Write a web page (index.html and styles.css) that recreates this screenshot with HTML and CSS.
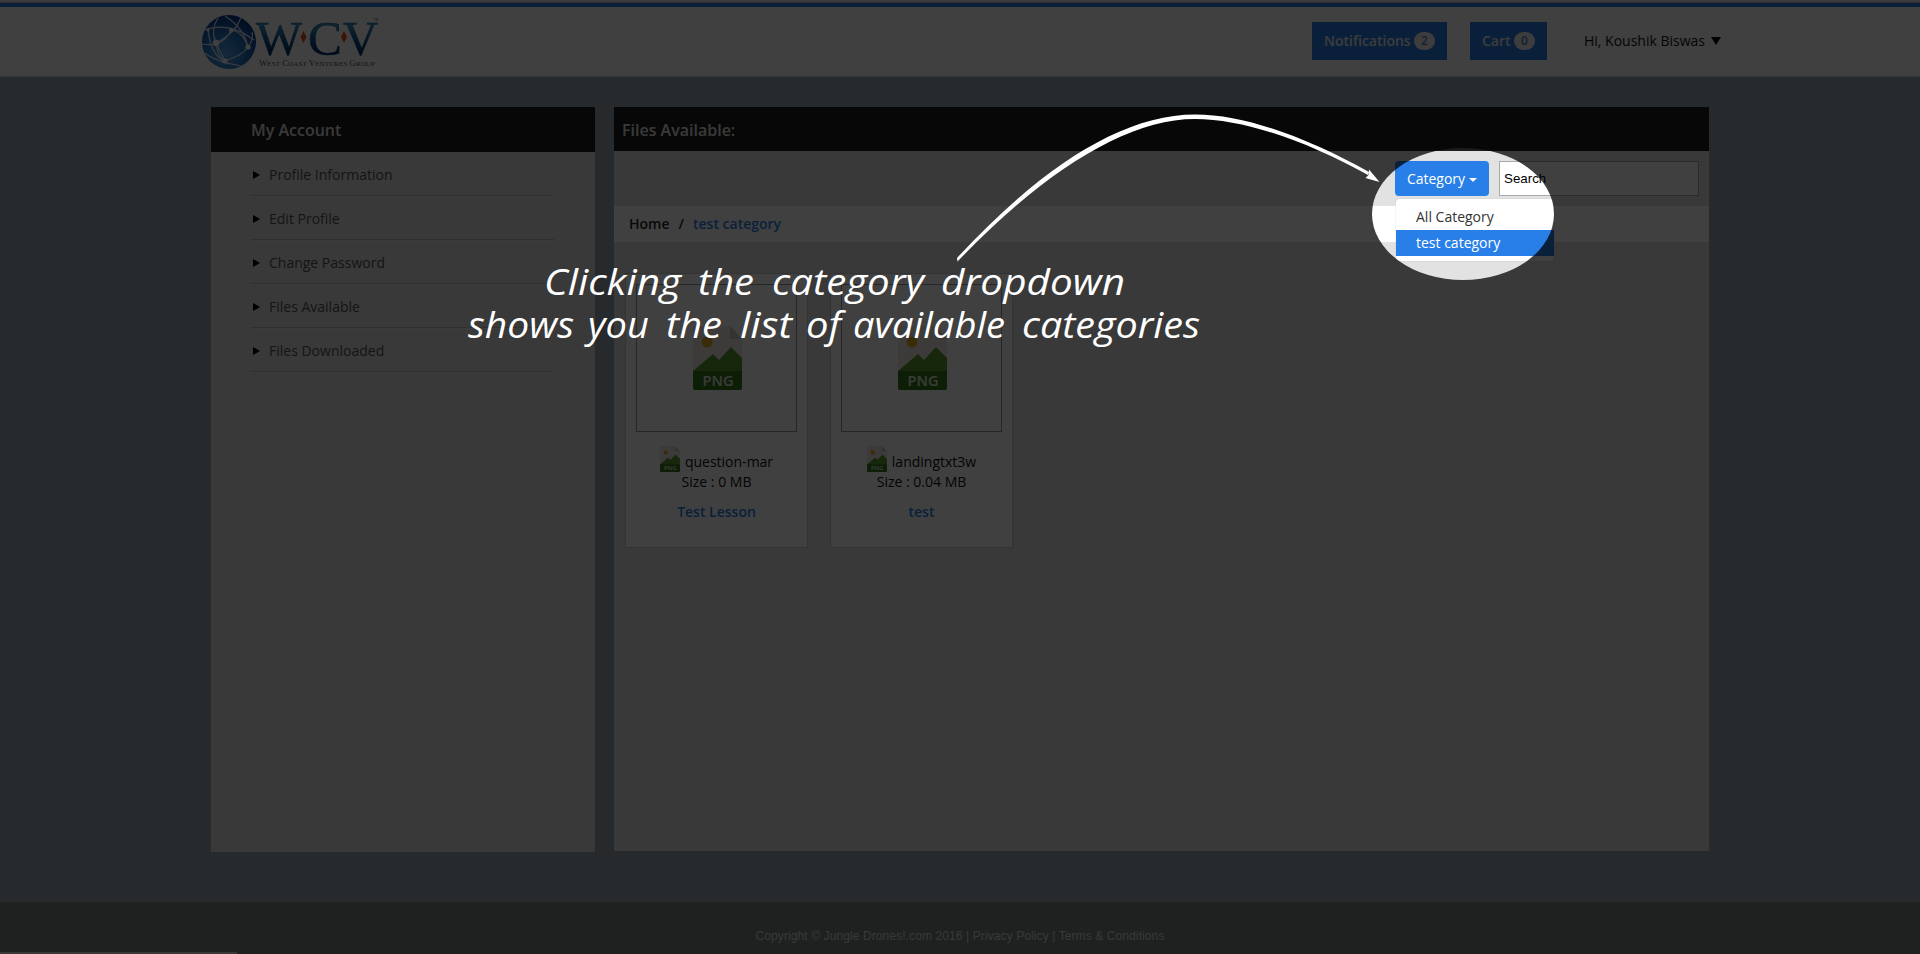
FILE: index.html
```html
<!DOCTYPE html>
<html lang="en">
<head>
<meta charset="utf-8">
<title>Files Available</title>
<link rel="stylesheet" href="styles.css">
</head>
<body>
<svg class="defs" width="0" height="0" aria-hidden="true">
  <symbol id="png" viewBox="0 0 49 64">
    <path d="M2 0H37L49 13V64H0V2Q0 0 2 0Z" fill="#f1ece6"/>
    <path d="M37 0L49 13H39Q37 13 37 11Z" fill="#d0cac4"/>
    <circle cx="14" cy="16" r="5.5" fill="#e8b020"/>
    <path d="M0 45L20 28L26 34L38 21L49 32V46H0Z" fill="#589a30"/>
    <path d="M0 45H49V62Q49 64 47 64H2Q0 64 0 62Z" fill="#377a18"/>
    <text x="25" y="60" text-anchor="middle" class="png-label" textLength="31" lengthAdjust="spacingAndGlyphs">PNG</text>
  </symbol>
</svg>
<header class="header">
  <svg class="logo" width="182" height="58" viewBox="0 0 182 58">
    <defs>
      <radialGradient id="globe" cx=".42" cy=".72" r=".75"><stop offset="0" stop-color="#4fa8e8"/><stop offset=".5" stop-color="#2474bd"/><stop offset="1" stop-color="#082f83"/></radialGradient>
      <linearGradient id="ink" x1="0" y1="0" x2="0" y2="1"><stop offset=".2" stop-color="#3c9dc8"/><stop offset=".55" stop-color="#0b4f8c"/><stop offset=".8" stop-color="#05285c"/></linearGradient>
    </defs>
    <circle cx="29" cy="29" r="27" fill="url(#globe)"/>
    <g fill="none" stroke="#dcecff" stroke-width="1.2">
      <path d="M4 17Q29 8 54 27M16 30Q36 20 41 4M16 30Q10 17 18 5M16 30L25 48Q43 42 48 34M2 31Q23 35 31 17Q42 18 48 34M48 34Q44 15 25 3M25 48Q11 43 8 17M16 30Q18 45 25 48M5 40Q14 48 41 53M48 34Q54 26 52 19"/>
    </g>
    <g fill="#fff"><circle cx="16" cy="30" r="3.2"/><circle cx="25" cy="48" r="2.6"/><circle cx="48" cy="34" r="2.6"/><circle cx="31" cy="17" r="2"/><circle cx="8" cy="17" r="1.5"/></g>
    <g class="logo-letters" fill="url(#ink)">
      <text x="56" y="42" textLength="46" lengthAdjust="spacingAndGlyphs">W</text>
      <text x="108" y="42" textLength="34" lengthAdjust="spacingAndGlyphs">C</text>
      <text x="143" y="42" textLength="35" lengthAdjust="spacingAndGlyphs">V</text>
    </g>
    <path d="M103.500 18L106.500 24L103.500 30L100.500 24ZM144 18L147 24L144 30L141 24Z" fill="#e5501e"/>
    <text x="59" y="53" class="logo-sub" textLength="116" lengthAdjust="spacingAndGlyphs">W<tspan class="sc">EST</tspan> C<tspan class="sc">OAST</tspan> V<tspan class="sc">ENTURES</tspan> G<tspan class="sc">ROUP</tspan></text>
    <text x="174" y="8" class="tm">TM</text>
  </svg>
  <nav class="account">
    <a class="btn notifications">Notifications <span class="badge">2</span></a>
    <a class="btn cart">Cart <span class="badge">0</span></a>
    <span class="user">Hi, Koushik Biswas <i class="down"></i></span>
  </nav>
</header>
<main class="page">
  <aside class="sidebar">
    <h2 class="side-title">My Account</h2>
    <ul class="menu">
      <li>Profile Information</li>
      <li>Edit Profile</li>
      <li>Change Password</li>
      <li>Files Available</li>
      <li>Files Downloaded</li>
    </ul>
  </aside>
  <section class="files">
    <h2 class="files-title">Files Available:</h2>
    <div class="toolbar">
      <div class="dropdown">
        <button class="category">Category<i class="caret"></i></button>
        <ul class="options">
          <li>All Category</li>
          <li class="active">test category</li>
        </ul>
      </div>
      <input class="search" type="text" value="Search">
    </div>
    <div class="crumbs"><span>Home</span><span class="slash">/</span><a>test category</a></div>
    <div class="cards">
      <article class="card">
        <div class="thumb"><svg width="49" height="64"><use href="#png"/></svg></div>
        <div class="name"><svg width="20" height="26"><use href="#png"/></svg><span>question-mar</span></div>
        <div class="size">Size : 0 MB</div>
        <a class="lesson">Test Lesson</a>
      </article>
      <article class="card">
        <div class="thumb"><svg width="49" height="64"><use href="#png"/></svg></div>
        <div class="name"><svg width="20" height="26"><use href="#png"/></svg><span>landingtxt3w</span></div>
        <div class="size">Size : 0.04 MB</div>
        <a class="lesson">test</a>
      </article>
    </div>
  </section>
</main>
<footer class="footer"><span>Copyright © Jungle Drones!.com 2016 | Privacy Policy | Terms &amp; Conditions</span><i class="status"></i></footer>

<svg class="tour" width="1920" height="954" viewBox="0 0 1920 954">
  <path d="M0 0H1920V954H0ZM1372 214a91 66 0 0 0 182 0a91 66 0 0 0 -182 0Z" fill="#000" fill-opacity=".75" fill-rule="evenodd"/>
  <path d="M957 258C1040 168 1122 114.500 1195 114.500C1248 114.500 1311 140 1369 172L1368 175C1310 143 1246 119 1195 119C1126 119 1042 173 957.500 261.500Z" fill="#fff"/>
  <path d="M1379.500 182L1365.500 178L1368.500 175L1369 169.500Z" fill="#fff"/>
  <g class="hint">
    <text y="295"><tspan x="544" textLength="137" lengthAdjust="spacingAndGlyphs">Clicking</tspan> <tspan x="698" textLength="56" lengthAdjust="spacingAndGlyphs">the</tspan> <tspan x="772" textLength="152" lengthAdjust="spacingAndGlyphs">category</tspan> <tspan x="941" textLength="184" lengthAdjust="spacingAndGlyphs">dropdown</tspan></text>
    <text y="338"><tspan x="468" textLength="106" lengthAdjust="spacingAndGlyphs">shows</tspan> <tspan x="588" textLength="61" lengthAdjust="spacingAndGlyphs">you</tspan> <tspan x="666" textLength="56" lengthAdjust="spacingAndGlyphs">the</tspan> <tspan x="740" textLength="52" lengthAdjust="spacingAndGlyphs">list</tspan> <tspan x="806" textLength="35" lengthAdjust="spacingAndGlyphs">of</tspan> <tspan x="853" textLength="152" lengthAdjust="spacingAndGlyphs">available</tspan> <tspan x="1022" textLength="178" lengthAdjust="spacingAndGlyphs">categories</tspan></text>
  </g>
</svg>
</body>
</html>
```
FILE: styles.css
```css
* { box-sizing: border-box; }
body { margin: 0; width: 1920px; height: 954px; overflow: hidden; display: flex; flex-direction: column; background: #9ca6b4; font: 14px/20px "Open Sans", sans-serif; color: #111; }
h2, ul { margin: 0; padding: 0; list-style: none; font-weight: 600; }
.defs { position: absolute; }
.png-label { font: 600 15px "Open Sans", sans-serif; fill: #e5ebe0; }

.header { height: 77px; flex: none; display: flex; justify-content: space-between; padding: 6px 198px 0 200px; background: linear-gradient(#ececec 0 2px, #bcbcbc 2px 3px, #287fe8 3px 7px, #fff 7px); border-bottom: 1px solid #d2d2d2; }
.logo { margin-top: 7px; }
.logo-letters { font: 48px "Liberation Serif", serif; stroke: #0b4f8c; stroke-width: .5; }
.logo-sub { font: 8px "Liberation Serif", serif; fill: #555; }
.sc { font-size: 6.500px; }
.tm { font: 3px "Liberation Sans", sans-serif; fill: #555; }
.account { display: flex; align-items: flex-start; padding-top: 16px; }
.btn { height: 38px; display: flex; align-items: center; background: #287fe8; color: #eee; font-weight: 600; padding-left: 12px; }
.notifications { width: 135px; margin-right: 23px; }
.cart { width: 77px; margin-right: 37px; }
.badge { width: 21px; height: 18px; border-radius: 9px; background: #f2f2f2; color: #4a7fc0; font-size: 12px; line-height: 18px; text-align: center; margin: 0 12px 0 auto; }
.user { line-height: 38px; display: flex; align-items: center; width: 137px; margin-right: 1px; justify-content: space-between; white-space: nowrap; }
.down { border: 5px solid transparent; border-top: 8px solid #000; border-bottom: 0; }

.page { flex: none; height: 825px; display: flex; align-items: flex-start; gap: 19px; padding: 30px 211px 0; }
.sidebar { width: 384px; height: 745px; background: #e2e2e2; }
.side-title, .files-title { background: #1c1c1c; color: #e4e4e4; font-size: 16px; }
.side-title { height: 45px; line-height: 46px; padding-left: 40px; }
.menu { padding: 0 41px 0 40px; font-weight: 400; color: #555; }
.menu li { height: 44px; line-height: 45px; display: flex; align-items: center; gap: 9px; padding: 2px 0 0 2px; border-bottom: 1px solid #bdbdbd; box-shadow: 0 1px #eee; }
.menu li::before { content: ""; border: 4px solid transparent; border-left: 7px solid #000; border-right: 0; }

.files { width: 1095px; height: 744px; background: #e2e2e2; }
.files-title { height: 44px; line-height: 46px; padding-left: 8px; }
.toolbar { height: 55px; display: flex; justify-content: flex-end; gap: 10px; padding: 10px 10px 0; }
.dropdown { position: relative; }
.category { width: 94px; height: 35px; display: flex; align-items: center; justify-content: center; gap: 4px; border: 0; border-radius: 4px; padding: 0 0 1px; background: #287fe8; color: #fff; font: 14px "Open Sans", sans-serif; }
.caret { border: 4px solid transparent; border-top-color: #fff; border-bottom: 0; margin-top: 4px; }
.options { position: absolute; top: 38px; left: 1px; width: 158px; padding: 5px 0; background: #fff; border-radius: 3px; font-weight: 400; box-shadow: 0 0 1px rgba(0,0,0,.3); z-index: 1; }
.options li { height: 26px; line-height: 26px; padding-left: 20px; color: #333; }
.options .active { background: #287fe8; color: #fff; }
.search { width: 200px; height: 35px; border: 1px solid #aaa; padding: 0 4px; background: #fff; font: 13.333px "Liberation Sans", sans-serif; }
.crumbs { height: 36px; background: #fff; display: flex; align-items: center; padding-left: 15px; font-weight: 600; color: #222; }
.slash { margin: 0 9px; }
.crumbs a, .lesson { color: #287fe8; }
.cards { display: flex; gap: 22px; padding: 31px 11px; }
.card { width: 183px; height: 275px; border: 1px solid #ccc; background: #fff; display: flex; flex-direction: column; align-items: center; padding-top: 10px; }
.thumb { width: 161px; height: 148px; border: 1px solid #999; display: flex; align-items: flex-start; justify-content: center; padding: 41px 0 0 1px; }
.name { display: flex; align-items: center; gap: 5px; height: 26px; margin: 14px 0 0; }
.name span { padding-top: 5px; }
.size { margin: 0; }
.lesson { font-weight: 600; margin-top: 10px; }

.footer { flex: 1; background: #7c8480; display: flex; justify-content: center; padding-top: 24px; font: 12px/20px "Liberation Sans", sans-serif; letter-spacing: .1px; color: #ddd; position: relative; }
.status { position: absolute; left: 0; bottom: 0; width: 237px; height: 2px; background: #dedede; }

.tour { position: absolute; left: 0; top: 0; z-index: 5; }
.hint { font: italic 37px "Open Sans", sans-serif; fill: #fff; }
```
